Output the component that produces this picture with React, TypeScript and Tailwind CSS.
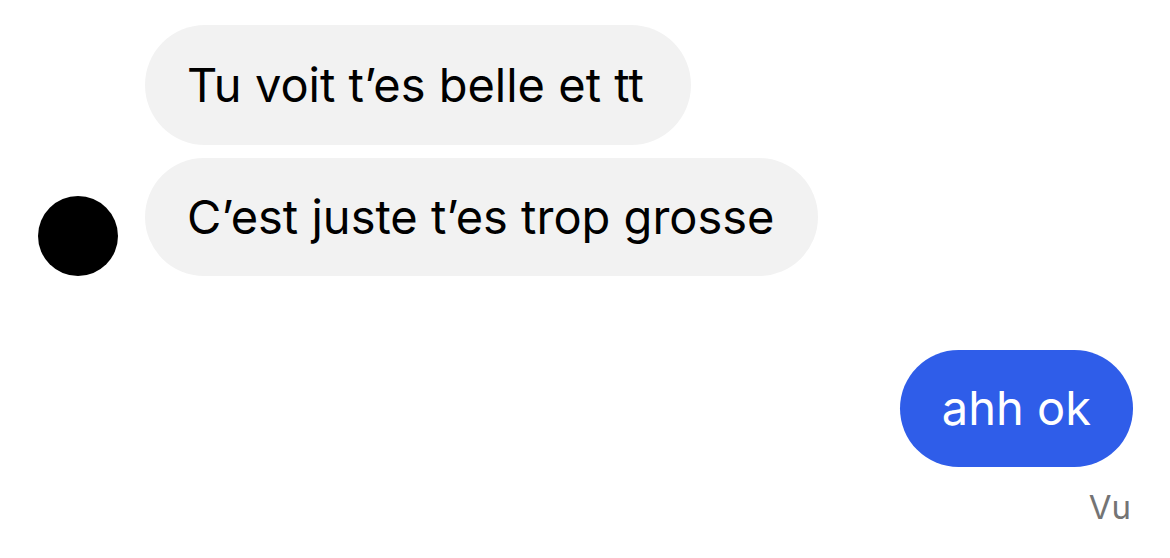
export default function App() {
  return (
    <div
      className="h-[558px] w-[1170px] bg-white overflow-hidden"
      style={{ fontFamily: "Inter, 'Liberation Sans', sans-serif" }}
    >
      <div className="flex flex-col pt-[25px]">
        {/* incoming group */}
        <div className="flex flex-col gap-[13px] pl-[145px]">
          <div className="self-start flex h-[120px] items-center rounded-full bg-[#f2f2f2] pl-[42px] pr-[47px] text-[47px] text-black">
            Tu voit t’es belle et tt
          </div>
          <div className="relative self-start flex h-[118px] items-center rounded-full bg-[#f2f2f2] pl-[42px] pr-[43px] text-[47px] text-black">
            <div className="absolute -left-[107px] bottom-0 h-[80px] w-[80px] rounded-full bg-black" />
            C’est juste t’es trop grosse
          </div>
        </div>

        {/* outgoing */}
        <div className="mt-[74px] flex flex-col items-end pr-[37px]">
          <div className="flex h-[117px] items-center rounded-full bg-[#2f5de9] pl-[42px] pr-[42px] text-[47px] text-white">
            ahh ok
          </div>
          <div className="mt-[16px] pr-[2px] text-[33px] text-[#747474]">Vu</div>
        </div>
      </div>
    </div>
  );
}
